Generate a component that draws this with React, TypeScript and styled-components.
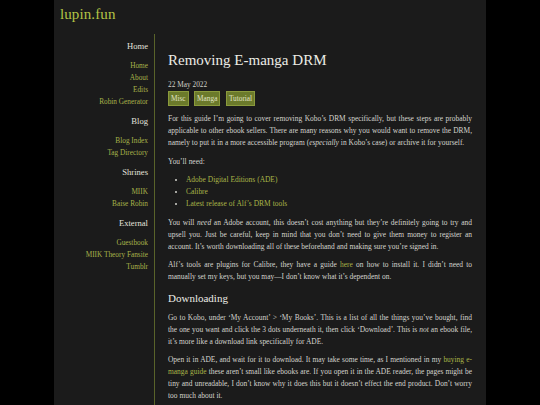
import styled, { createGlobalStyle } from 'styled-components'

const GlobalStyle = createGlobalStyle`
  html, body {
    margin: 0;
    padding: 0;
    background: #000;
  }
  body {
    font-family: "Liberation Serif", "DejaVu Serif", serif;
    color: #d6d6d0;
  }
`

const navGroups = [
  { title: 'Home', links: ['Home', 'About', 'Edits', 'Robin Generator'] },
  { title: 'Blog', links: ['Blog Index', 'Tag Directory'] },
  { title: 'Shrines', links: ['MIIK', 'Baise Robin'] },
  { title: 'External', links: ['Guestbook', 'MIIK Theory Fansite', 'Tumblr'] },
]

const App = () => {
  return (
    <>
      <GlobalStyle />
      <Page>
        <Header>
          <Logo>lupin.fun</Logo>
        </Header>
        <Body>
          <Sidebar>
            {navGroups.map((g) => (
              <NavGroup key={g.title}>
                <NavTitle>{g.title}</NavTitle>
                <NavList>
                  {g.links.map((l) => (
                    <NavLink key={l}>{l}</NavLink>
                  ))}
                </NavList>
              </NavGroup>
            ))}
          </Sidebar>
          <Main>
            <Title>Removing E-manga DRM</Title>
            <DateLine>22 May 2022</DateLine>
            <Tags>
              <Tag>Misc</Tag>
              <Tag>Manga</Tag>
              <Tag>Tutorial</Tag>
            </Tags>
            <P>
              For this guide I’m going to cover removing Kobo’s DRM specifically, but these steps are probably
              applicable to other ebook sellers. There are many reasons why you would want to remove the DRM,
              namely to put it in a more accessible program (<em>especially</em> in Kobo’s case) or archive it for
              yourself.
            </P>
            <P>You’ll need:</P>
            <List>
              <li><A>Adobe Digital Editions (ADE)</A></li>
              <li><A>Calibre</A></li>
              <li><A>Latest release of Alf’s DRM tools</A></li>
            </List>
            <P>
              You will <em>need</em> an Adobe account, this doesn’t cost anything but they’re definitely going to try
              and upsell you. Just be careful, keep in mind that you don’t need to give them money to register an
              account. It’s worth downloading all of these beforehand and making sure you’re signed in.
            </P>
            <P>
              Alf’s tools are plugins for Calibre, they have a guide <A>here</A> on how to install it. I didn’t need
              to manually set my keys, but you may—I don’t know what it’s dependent on.
            </P>
            <H2>Downloading</H2>
            <P>
              Go to Kobo, under ‘My Account’ &gt; ‘My Books’. This is a list of all the things you’ve bought, find the
              one you want and click the 3 dots underneath it, then click ‘Download’. This is <em>not</em> an ebook
              file, it’s more like a download link specifically for ADE.
            </P>
            <P>
              Open it in ADE, and wait for it to download. It may take some time, as I mentioned in my{' '}
              <A>buying e-manga guide</A> these aren’t small like ebooks are. If you open it in the ADE reader, the
              pages might be tiny and unreadable, I don’t know why it does this but it doesn’t effect the end
              product. Don’t worry too much about it.
            </P>
          </Main>
        </Body>
      </Page>
    </>
  )
}

export default App

const Page = styled.div`
  width: 432px;
  margin: 0 auto;
  min-height: 405px;
  background: #1b1b1b;
`
const Header = styled.header`
  padding: 5px 0 0 6px;
  height: 34px;
  box-sizing: border-box;
`
const Logo = styled.div`
  color: #b3c446;
  font-size: 15px;
  line-height: 18px;
  letter-spacing: 0.1px;
`
const Body = styled.div`
  display: flex;
  align-items: flex-start;
`
const Sidebar = styled.nav`
  width: 101px;
  box-sizing: border-box;
  padding: 5px 6px 0 0;
  border-right: 1px solid #59632a;
  min-height: 371px;
  text-align: right;
`
const NavGroup = styled.div`
  margin-bottom: 6px;
`
const NavTitle = styled.div`
  color: #e2e2dc;
  font-size: 8.6px;
  line-height: 14px;
  margin-bottom: 7px;
`
const NavList = styled.div`
  display: flex;
  flex-direction: column;
`
const NavLink = styled.a`
  color: #a6b24a;
  font-size: 7.3px;
  line-height: 12px;
`
const Main = styled.main`
  flex: 1;
  padding: 16px 14px 0 13px;
  font-size: 7.45px;
  line-height: 12px;
  word-spacing: 0.1px;
  text-align: justify;
`
const Title = styled.h1`
  font-weight: normal;
  font-size: 15px;
  line-height: 20px;
  color: #ecece6;
  margin: 0 0 10px;
  text-align: left;
`
const DateLine = styled.div`
  font-size: 7.3px;
  line-height: 10px;
  color: #cfcfc8;
`
const Tags = styled.div`
  display: flex;
  gap: 5.5px;
  margin: 1px 0 7px;
`
const Tag = styled.span`
  background: #6b7a2b;
  border: 1px solid #8a9a3c;
  color: #e0e4c6;
  font-size: 7.3px;
  line-height: 13px;
  padding: 0 2px;
`
const P = styled.p`
  margin: 0 0 6.5px;
  color: #d4d4ce;
`
const List = styled.ul`
  margin: 0 0 6.5px;
  padding-left: 18px;
  color: #d4d4ce;
`
const A = styled.a`
  color: #a9b548;
`
const H2 = styled.h2`
  font-weight: normal;
  font-size: 11px;
  line-height: 16px;
  color: #ecece6;
  margin: 3px 0 6px;
  text-align: left;
`
